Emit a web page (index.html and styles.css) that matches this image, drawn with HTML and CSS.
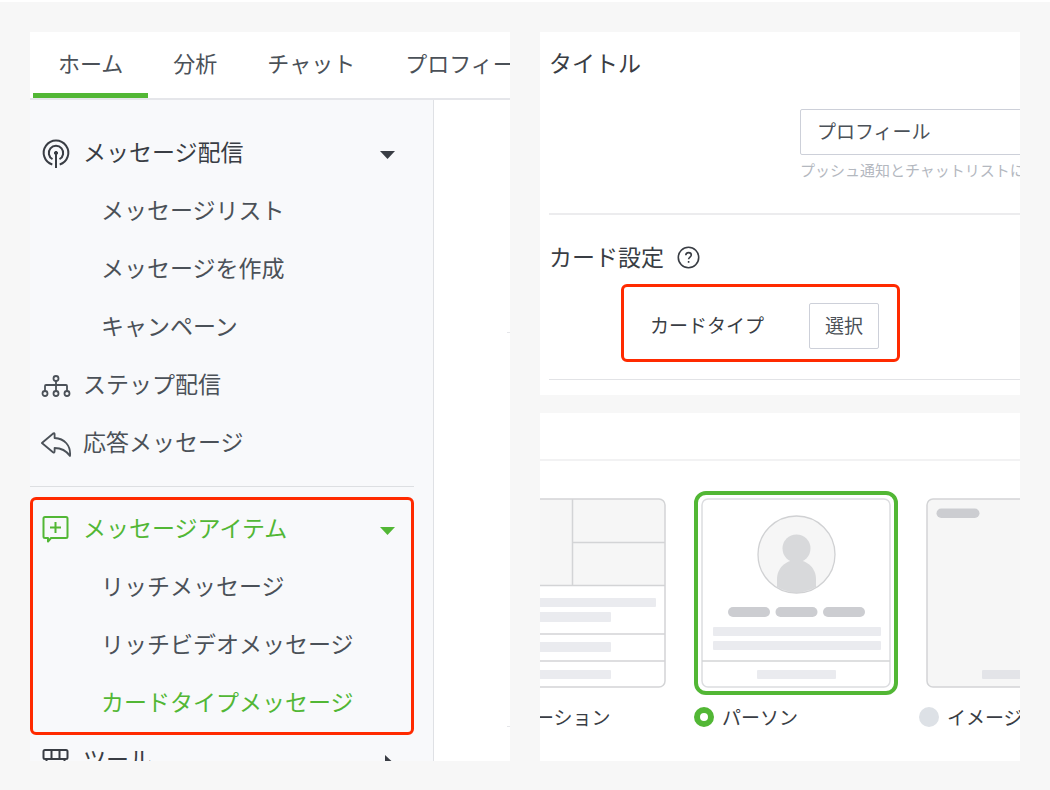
FILE: index.html
```html
<!DOCTYPE html>
<html lang="ja">
<head>
<meta charset="utf-8">
<title>カードタイプメッセージ</title>
<link rel="stylesheet" href="styles.css">
</head>
<body>
<div class="page">
  <section class="panel manager">
    <nav class="tabs">
      <a class="tab tab-active" href="#">ホーム</a>
      <a class="tab" href="#">分析</a>
      <a class="tab" href="#">チャット</a>
      <a class="tab" href="#">プロフィール</a>
    </nav>
    <div class="workspace">
      <nav class="sidebar">
        <button class="row row-strong" type="button">
          <svg class="icon" viewBox="0 0 30 30" fill="none" stroke="currentColor" stroke-width="2"><path d="M11.3 26.500A12.3 12.3 0 1 1 18.7 26.500"/><path d="M11.5 21.2A7.2 7.2 0 1 1 18.5 21.2"/><path d="M15 15v15"/><circle cx="15" cy="15" r="1.6" fill="currentColor" stroke-width="1"/></svg>
          <span class="row-text">メッセージ配信</span>
          <svg class="caret" viewBox="0 0 15 8"><path d="M0 0h15L7.500 8z" fill="currentColor"/></svg>
        </button>
        <a class="row row-sub" href="#"><span class="row-text">メッセージリスト</span></a>
        <a class="row row-sub" href="#"><span class="row-text">メッセージを作成</span></a>
        <a class="row row-sub" href="#"><span class="row-text">キャンペーン</span></a>
        <a class="row" href="#">
          <svg class="icon" viewBox="0 0 30 30" fill="none" stroke="currentColor" stroke-width="1.800"><circle cx="15" cy="8.500" r="2.500"/><circle cx="4" cy="23.500" r="2.500"/><circle cx="15" cy="23.500" r="2.500"/><circle cx="26" cy="23.500" r="2.500"/><path d="M15 11v10M4 21v-5q0-1 1-1h20q1 0 1 1v5"/></svg>
          <span class="row-text">ステップ配信</span>
        </a>
        <a class="row" href="#">
          <svg class="icon" viewBox="0 0 30 30" fill="none" stroke="currentColor" stroke-width="1.800" stroke-linejoin="round"><path d="M.9 15 12.500 5.300Q13.600 4.700 13.600 6.100V10C23.500 10.500 30 17.500 29 28C25.500 23 21 20 13.600 20V23.300Q13.600 25.300 12 24.200Z"/></svg>
          <span class="row-text">応答メッセージ</span>
        </a>
        <hr class="divider">
        <div class="highlight highlight-menu">
          <button class="row row-current" type="button">
            <svg class="icon" viewBox="0 0 30 30" fill="none" stroke="currentColor" stroke-width="2" stroke-linejoin="round"><path d="M4 3h21q1.500 0 1.500 1.500v18q0 1.500-1.500 1.500H10L7 27.500V24H4q-1.500 0-1.500-1.500v-18Q2.500 3 4 3z"/><path d="M14.500 8v11M9 13.500h11"/></svg>
            <span class="row-text">メッセージアイテム</span>
            <svg class="caret" viewBox="0 0 15 8"><path d="M0 0h15L7.500 8z" fill="currentColor"/></svg>
          </button>
          <a class="row row-sub" href="#"><span class="row-text">リッチメッセージ</span></a>
          <a class="row row-sub" href="#"><span class="row-text">リッチビデオメッセージ</span></a>
          <a class="row row-sub row-current" href="#"><span class="row-text">カードタイプメッセージ</span></a>
        </div>
        <button class="row row-strong row-tools" type="button">
          <svg class="icon" viewBox="0 0 30 30" fill="none" stroke="currentColor" stroke-width="2"><path d="M4 5h21q1.500 0 1.500 1.500v6q0 1.500-1.500 1.500H4q-1.500 0-1.500-1.500v-6Q2.500 5 4 5zM10.500 5v9M18.500 5v9M5.500 14v12h18V14"/></svg>
          <span class="row-text">ツール</span>
          <svg class="caret caret-side" viewBox="0 0 15 14"><path d="M5 0l7.500 7L5 14z" fill="currentColor"/></svg>
        </button>
      </nav>
      <div class="content">
        <div class="block"></div>
        <div class="block block-tall"></div>
      </div>
    </div>
  </section>

  <div class="column">
    <section class="panel settings">
      <div class="group">
        <h2 class="heading"><label for="title">タイトル</label></h2>
        <div class="field">
          <input class="input" id="title" type="text" value="プロフィール">
          <p class="hint">プッシュ通知とチャットリストに</p>
        </div>
      </div>
      <div class="group group-card">
        <h2 class="heading">カード設定
          <svg class="help" viewBox="0 0 23 23" fill="none" stroke="currentColor" stroke-width="1.600"><circle cx="11.500" cy="11.500" r="10.200"/><path d="M8.800 9.300c0-1.700 1.200-2.700 2.800-2.700s2.700 1 2.700 2.400c0 2-2.700 2.100-2.700 4.300"/><path d="M11.600 15v1.800"/></svg>
        </h2>
        <div class="highlight highlight-type">
          <span class="type-label" id="type-label">カードタイプ</span>
          <button class="select-button" type="button" aria-describedby="type-label">選択</button>
        </div>
      </div>
    </section>

    <section class="panel picker">
      <div class="picker-bar"></div>
      <div class="options">
        <label class="option">
          <span class="thumb">
            <svg class="art" viewBox="0 0 190 190">
              <rect x="1" y="1" width="189" height="188" rx="6" fill="#fff"/>
              <path d="M1 87V7q0-6 6-6h176q6 0 6 6v80z" fill="#f6f6f6"/>
              <g fill="#eaebef"><rect x="14" y="100" width="166" height="9" rx="1"/><rect x="14" y="114" width="121" height="10" rx="1"/><rect x="14" y="144" width="121" height="10" rx="1"/><rect x="14" y="172" width="121" height="9" rx="1"/></g>
              <g fill="none" stroke="#d3d4d6" stroke-width="1.500"><rect x="1" y="1" width="188" height="188" rx="6"/><path d="M96.500 1v86M96.500 44.500H189M1 87.500h188M1 136h188M1 163h188"/></g>
            </svg>
          </span>
          <span class="choice"><input class="radio" type="radio" name="card">ロケーション</span>
        </label>
        <label class="option">
          <span class="thumb thumb-selected">
            <svg class="art" viewBox="0 0 190 190">
              <defs><clipPath id="avatar"><circle cx="95.500" cy="56.500" r="38"/></clipPath></defs>
              <rect x="1" y="1" width="188" height="188" rx="6" fill="#fff" stroke="#dcdde0" stroke-width="1.500"/>
              <circle cx="95.500" cy="56.500" r="38.500" fill="#f6f6f6"/>
              <g clip-path="url(#avatar)" fill="#d8d9db"><circle cx="95.500" cy="50.500" r="14"/><path d="M76 98V81c0-10 8-19 19.500-19S115 71 115 81v17z"/></g>
              <circle cx="95.500" cy="56.500" r="38.500" fill="none" stroke="#d0d1d3" stroke-width="1.300"/>
              <g fill="#cccdd1"><rect x="27" y="109" width="42" height="10" rx="5"/><rect x="74.500" y="109" width="42" height="10" rx="5"/><rect x="122" y="109" width="42" height="10" rx="5"/></g>
              <g fill="#eaebef"><rect x="12" y="129" width="168" height="9" rx="1"/><rect x="12" y="143" width="168" height="9" rx="1"/><rect x="56" y="172" width="79" height="9" rx="1"/></g>
              <path d="M1 163h188" stroke="#d3d4d6" stroke-width="1.500"/>
            </svg>
          </span>
          <span class="choice"><input class="radio" type="radio" name="card" checked>パーソン</span>
        </label>
        <label class="option">
          <span class="thumb">
            <svg class="art" viewBox="0 0 190 190">
              <rect x="1" y="1" width="188" height="188" rx="6" fill="#f6f6f6" stroke="#d3d4d6" stroke-width="1.500"/>
              <rect x="10.500" y="10.500" width="43" height="9.500" rx="4.700" fill="#cccdd1"/>
              <rect x="56" y="172" width="79" height="9" rx="1" fill="#e3e4e8"/>
            </svg>
          </span>
          <span class="choice"><input class="radio" type="radio" name="card">イメージ</span>
        </label>
      </div>
    </section>
  </div>
</div>
</body>
</html>
```
FILE: styles.css
```css
* {
  box-sizing: border-box;
}

body {
  margin: 0;
  background: #f7f7f7;
  color: #4b5158;
  font-family: "Noto Sans CJK JP", sans-serif;
  font-weight: 400;
}

button,
input {
  margin: 0;
  color: inherit;
  font: inherit;
}

a {
  color: inherit;
  text-decoration: none;
}

.page {
  display: grid;
  grid-template-columns: minmax(0, 1fr) minmax(0, 1fr);
  grid-template-rows: minmax(0, 1fr);
  gap: 30px;
  height: 100vh;
  padding: 30px 30px 29px;
  border-top: 2px solid #fff;
}

.panel {
  overflow: hidden;
  background: #fff;
}

.column {
  display: flex;
  flex-direction: column;
  gap: 18px;
  min-height: 0;
}

/* Manager window */
.manager {
  display: flex;
  flex-direction: column;
}

.tabs {
  display: flex;
  flex: none;
  padding: 0 3px;
  border-bottom: 2px solid #e5e6ea;
}

.tab {
  flex: none;
  padding: 14px 25px 15px;
  border-bottom: 5px solid transparent;
  font-size: 22px;
  line-height: 32px;
}

.tab-active {
  border-bottom-color: #52b735;
}

.workspace {
  display: flex;
  flex: 1;
  min-height: 0;
}

.sidebar {
  flex: none;
  width: 404px;
  padding: 24px 19px 0 0;
  border-right: 1px solid #dfe1e5;
  background: #f8f9fb;
}

.row {
  display: flex;
  align-items: center;
  gap: 12px;
  width: 100%;
  height: 58px;
  padding: 0 19px 0 11px;
  border: 0;
  background: none;
  font-size: 23px;
  line-height: 32px;
  text-align: left;
  white-space: nowrap;
}

.row-sub {
  padding-left: 71px;
}

.row-strong {
  color: #393d44;
}

.row-current {
  color: #52b735;
}

.row-tools {
  margin-top: -4px;
}

.row-text {
  flex: 1;
  padding-bottom: 4px;
}

.icon {
  flex: none;
  width: 30px;
  height: 30px;
}

.caret {
  flex: none;
  width: 15px;
  height: 8px;
  margin-top: 4px;
}

.caret-side {
  height: 14px;
}

.divider {
  height: 1px;
  margin: 14px 0 10px;
  border: 0;
  background: #dddfe2;
}

.highlight {
  border: 3px solid #ff2a00;
  border-radius: 6px;
}

.highlight-menu .row {
  padding-right: 16px;
  padding-left: 8px;
}

.highlight-menu .row-sub {
  padding-left: 68px;
}

.content {
  flex: 1;
  padding-left: 73px;
}

.block {
  height: 233px;
  border-bottom: 1px solid #e5e6ea;
}

.block-tall {
  height: 394px;
}

/* Settings */
.settings {
  flex: none;
  padding-left: 9px;
}

.group {
  padding: 13px 0 33px;
  border-bottom: 2px solid #ececee;
}

.group-card {
  margin-bottom: 15px;
  padding: 24px 0 17px;
  border-bottom: 1px solid #e2e3e6;
}

.heading {
  display: flex;
  align-items: center;
  gap: 13px;
  margin: 0;
  color: #393d44;
  font-size: 23px;
  font-weight: inherit;
  line-height: 34px;
}

.help {
  width: 23px;
  height: 23px;
  margin-top: 2px;
}

.field {
  margin: 30px 0 0 251px;
}

.input {
  display: block;
  width: 300px;
  height: 46px;
  padding: 0 16px 4px;
  border: 1px solid #cdd0d9;
  border-radius: 2px;
  background: #fff;
  font-size: 19px;
}

.hint {
  margin: 5px 0 0;
  color: #b4b8bf;
  font-size: 15px;
  line-height: 20px;
  white-space: nowrap;
}

.highlight-type {
  display: flex;
  align-items: center;
  gap: 45px;
  width: max-content;
  margin: 11px 0 0 72px;
  padding: 16px 18px 10px 26px;
}

.type-label {
  padding-bottom: 2px;
  color: #393d44;
  font-size: 19px;
  line-height: 28px;
}

.select-button {
  width: 70px;
  height: 46px;
  padding: 0 0 4px;
  border: 1px solid #cdd0d9;
  border-radius: 2px;
  background: #fff;
  font-size: 19px;
}

/* Card type picker */
.picker {
  flex: 1;
}

.picker-bar {
  height: 48px;
  border-bottom: 2px solid #f2f2f3;
}

.options {
  display: flex;
  gap: 21px;
  margin: 30px 0 0 -71px;
}

.option {
  flex: none;
  width: 204px;
}

.thumb {
  display: block;
  padding: 3px;
  border: 4px solid transparent;
  border-radius: 12px;
}

.thumb-selected {
  border-color: #52b735;
}

.art {
  display: block;
  width: 100%;
}

.choice {
  display: flex;
  align-items: center;
  gap: 8px;
  margin-top: 8px;
  color: #393d44;
  font-size: 19px;
  line-height: 28px;
  white-space: nowrap;
}

.radio {
  flex: none;
  width: 20px;
  height: 20px;
  margin: 0;
  border-radius: 50%;
  background: #dde1e6;
  appearance: none;
}

.radio:checked {
  border: 6px solid #52b735;
  background: #fff;
}
```
